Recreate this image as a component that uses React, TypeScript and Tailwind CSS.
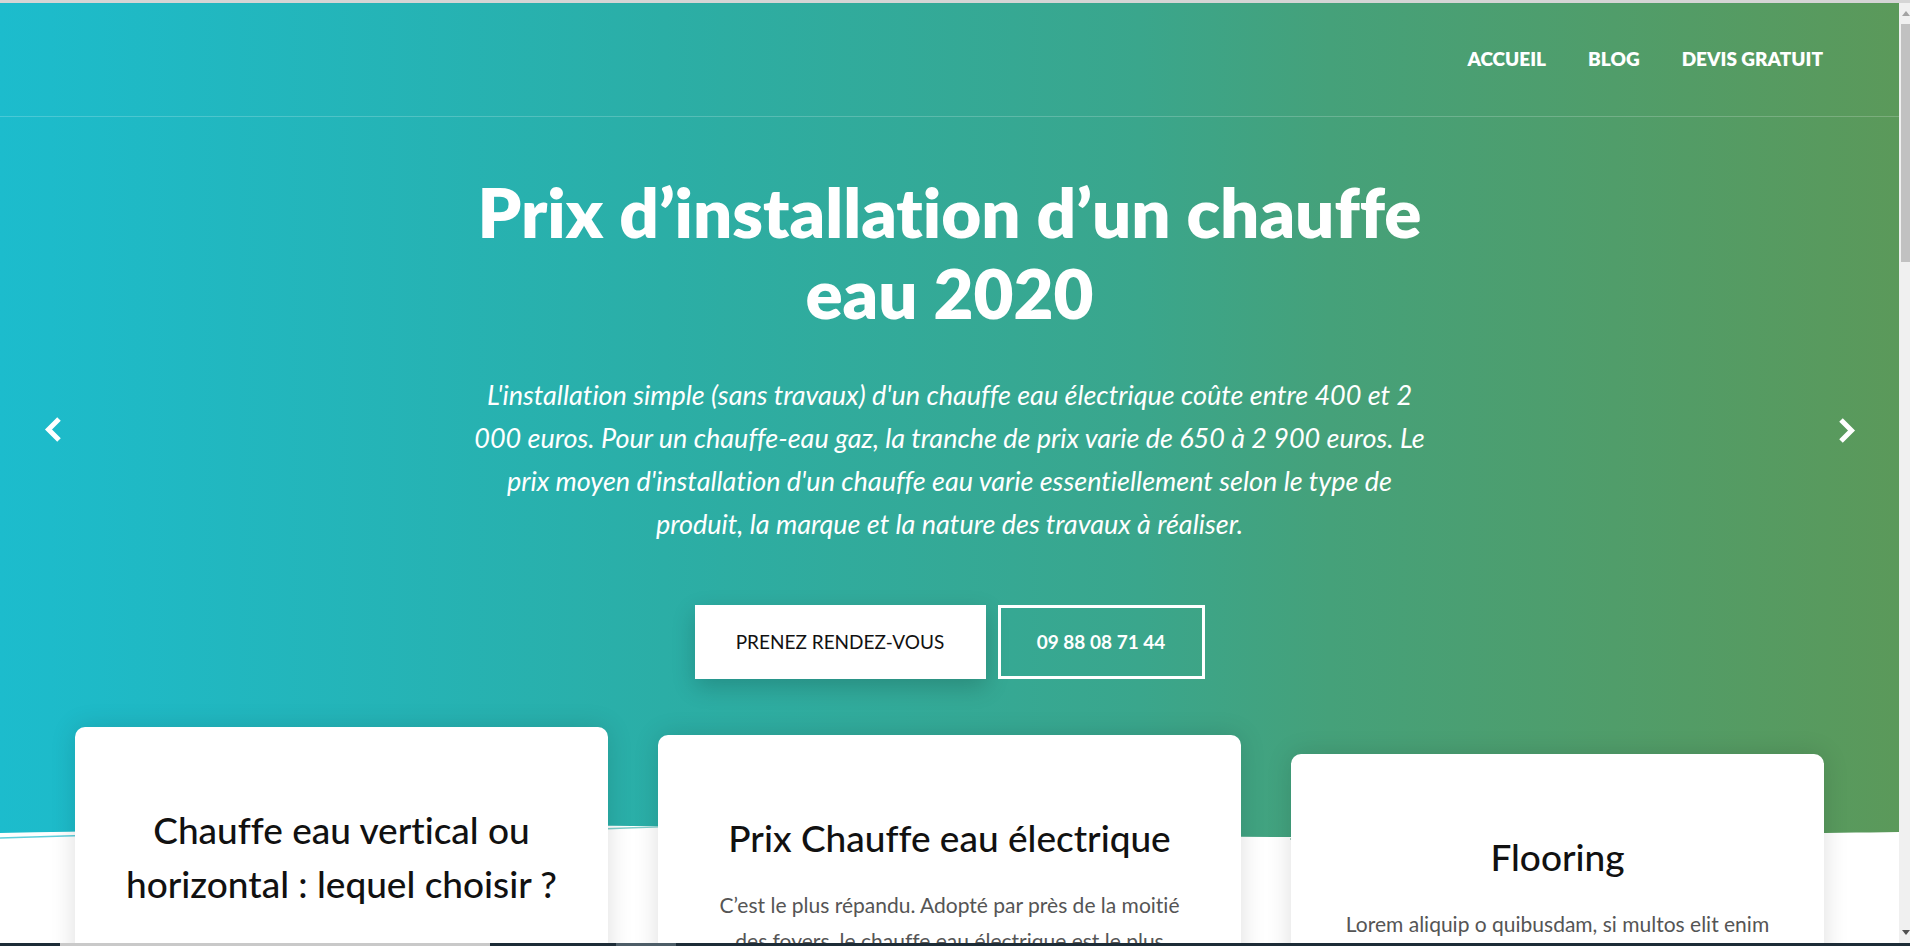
import { useState } from "react";

const navLinks = ["Accueil", "Blog", "Devis gratuit"];

const cards = [
	{
		title: "Chauffe eau vertical ou horizontal : lequel choisir ?",
		text: "Le choix dépend surtout de la place disponible dans votre logement et de la hauteur sous plafond.",
		box: "w-[533px] mt-0 px-[42px]",
	},
	{
		title: "Prix Chauffe eau électrique",
		text: "C’est le plus répandu. Adopté par près de la moitié des foyers, le chauffe eau électrique est le plus utilisé en France.",
		box: "w-[583px] mt-[8px] px-[50px]",
	},
	{
		title: "Flooring",
		text: "Lorem aliquip o quibusdam, si multos elit enim consequat, quis nostrud anim tempor.",
		box: "w-[533px] mt-[27px] px-[42px]",
	},
];

const Chevron = ({ dir }: { dir: "left" | "right" }) => (
	<svg width="18" height="27" viewBox="0 0 18 27" fill="none">
		<polyline
			points={dir === "left" ? "15,3 4.5,13.5 15,24" : "3,3 13.5,13.5 3,24"}
			stroke="white"
			strokeWidth="5"
			strokeLinejoin="miter"
		/>
	</svg>
);

const App = () => {
	const [slide] = useState(0);

	return (
		<div className="h-[946px] w-full flex flex-col overflow-hidden bg-white font-['Lato',sans-serif] [font-variant-ligatures:none]">
			<div className="h-[3px] bg-[#d5d5d5] shrink-0" />

			<div className="flex flex-1 min-h-0">
				<main className="relative flex-1 overflow-hidden">
					{/* hero */}
					<section
						className="relative bg-[linear-gradient(90deg,#1cbccd_0%,#2baea6_35%,#3aa68c_60%,#45a17a_70%,#5b995a_100%)] pb-[171px]"
						data-slide={slide}
					>
						<header className="h-[114px] border-b border-white/20 flex items-center justify-end pr-[76px]">
							<nav className="flex items-center gap-[42px]">
								{navLinks.map((link) => (
									<a
										key={link}
										href="#"
										className="text-white uppercase font-extrabold text-[19px]"
									>
										{link}
									</a>
								))}
							</nav>
						</header>

						<div className="w-[970px] mx-auto text-center text-white">
							<h1 className="mt-[54px] text-[69px] leading-[81px] font-extrabold">
								Prix d’installation d’un chauffe eau 2020
							</h1>
							<p className="mt-[40px] text-[27px] leading-[43px] italic">
								L'installation simple (sans travaux) d'un chauffe eau électrique coûte entre 400 et 2 000 euros. Pour un
								chauffe-eau gaz, la tranche de prix varie de 650 à 2 900 euros. Le prix moyen d'installation d'un chauffe
								eau varie essentiellement selon le type de produit, la marque et la nature des travaux à réaliser.
							</p>
							<div className="mt-[60px] flex justify-center gap-[12px]">
								<a
									href="#"
									className="w-[291px] h-[74px] bg-white flex items-center justify-center text-[#111] text-[19px] shadow-[0_8px_22px_rgba(0,0,0,0.18)]"
								>
									PRENEZ RENDEZ-VOUS
								</a>
								<a
									href="#"
									className="w-[207px] h-[74px] border-[3px] border-white flex items-center justify-center text-white font-bold text-[19px]"
								>
									09 88 08 71 44
								</a>
							</div>
						</div>

						<button className="absolute left-[44px] top-[413px]" aria-label="Précédent">
							<Chevron dir="left" />
						</button>
						<button className="absolute left-[1838px] top-[414px]" aria-label="Suivant">
							<Chevron dir="right" />
						</button>

						<svg
							className="absolute bottom-0 left-0 w-full h-[35px]"
							viewBox="0 0 1899 35"
							preserveAspectRatio="none"
						>
							<path
								d="M0,18 C300,12 500,10 650,11 C900,13 1100,22 1300,22 C1550,22 1750,19 1899,17 L1899,35 L0,35 Z"
								fill="white"
							/>
							<path d="M0,23 C120,19 220,17 320,16" stroke="#1cbccd" strokeOpacity="0.7" strokeWidth="1.5" fill="none" />
							<path d="M600,14 C640,12 680,11 720,11" stroke="#2aaea6" strokeOpacity="0.6" strokeWidth="1.5" fill="none" />
							<path d="M1290,24 C1340,24 1380,23 1420,23" stroke="#45a17a" strokeOpacity="0.6" strokeWidth="1.5" fill="none" />
						</svg>
					</section>

					{/* cards */}
					<section className="relative -mt-[123px] flex justify-center items-start gap-[50px]">
						{cards.map((card) => (
							<div
								key={card.title}
								className={`${card.box} h-[420px] bg-white rounded-[10px] shadow-[0_0_26px_rgba(0,0,0,0.13)] pt-[76px] text-center`}
							>
								<h3 className="text-[37px] leading-[54px] font-medium text-[#111]">{card.title}</h3>
								<p className="mt-[22px] text-[21px] leading-[36px] text-[#555]">{card.text}</p>
							</div>
						))}
					</section>
				</main>

				{/* scrollbar */}
				<div className="w-[11px] shrink-0 bg-[#f0f0f0] pl-[2px] flex flex-col">
					<div className="h-[21px] flex items-center justify-center">
						<div className="w-0 h-0 border-l-[4px] border-r-[4px] border-b-[5px] border-l-transparent border-r-transparent border-b-[#a3a3a3]" />
					</div>
					<div className="h-[238px] bg-[#c1c1c1]" />
					<div className="flex-1" />
					<div className="h-[21px] flex items-center justify-center">
						<div className="w-0 h-0 border-l-[4px] border-r-[4px] border-t-[5px] border-l-transparent border-r-transparent border-t-[#505050]" />
					</div>
				</div>
			</div>

			<div className="h-[3px] shrink-0 bg-[#1d2c37] flex">
				<div className="ml-[60px] w-[430px] bg-[#c9c9c9]" />
				<div className="ml-[126px] w-[60px] bg-[#4d5d67]" />
			</div>
		</div>
	);
};

export default App;
